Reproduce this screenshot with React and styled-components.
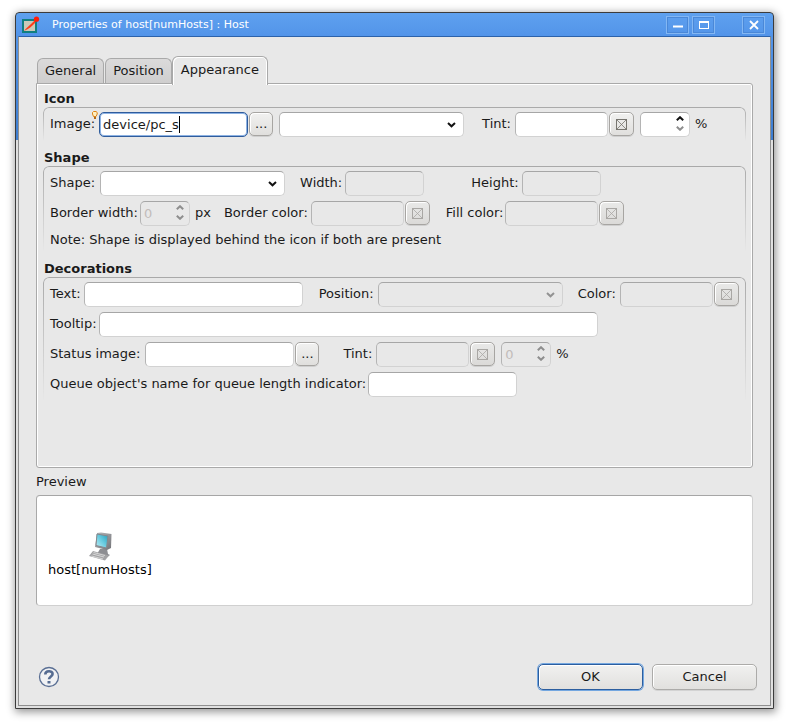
import React, { useState } from 'react'
import styled, { createGlobalStyle, css } from 'styled-components'

const GlobalStyle = createGlobalStyle`
  * {
    box-sizing: border-box;
  }

  body {
    margin: 0;
    background: #ffffff;
    color: #1a1a1a;
    font-family: "DejaVu Sans", Verdana, sans-serif;
    font-size: 13px;
    line-height: 16px;
  }

  button, input, select {
    font: inherit;
    color: inherit;
    margin: 0;
  }
`

const Page = styled.div`
  padding: 12px 15px 18px 15px;
`

const Dialog = styled.main`
  padding: 0 2px 2px 2px;
  border: 1px solid #3c3c3c;
  border-radius: 4px 4px 0 0;
  background: linear-gradient(#5fa1ef 0, #5294e9 23px, #3d7dd0 127px, #e0e0e0 127px);
  box-shadow: 1px 2px 8px 1px rgba(0, 0, 0, 0.42);
`

const TitleBar = styled.header`
  display: flex;
  align-items: center;
  height: 23px;
  padding: 0 6px 0 4px;
  color: #ffffff;
  font-size: 11px;
`

const Title = styled.h1`
  flex: 1;
  margin: 0 0 0 12px;
  font-size: 11px;
  font-weight: normal;
`

const WindowButton = styled.button`
  display: flex;
  align-items: center;
  justify-content: center;
  width: 23px;
  height: 18px;
  margin-left: ${props => props.$apart ? '27px' : '3px'};
  padding: 0;
  border: 1px solid #83b7f3;
  background: transparent;
  box-shadow: inset 0 0 0 1px #4a88d8;
`

const Content = styled.div`
  display: flex;
  flex-direction: column;
  padding: 18px 13px 15px 17px;
  border: 1px solid #8f8f8f;
  border-top-color: #2c62aa;
  background: #e8e8e8;
`

const Tabs = styled.div`
  display: flex;
  align-items: flex-end;
  gap: 1px;
  height: 28px;
  padding-left: 1px;
`

const Tab = styled.button`
  height: 25px;
  padding: 0 7px;
  border: 1px solid #a9a9a9;
  border-bottom: none;
  border-radius: 6px 6px 0 0;
  background: linear-gradient(#dbdada, #cfcece);

  ${props => props.$active && css`
    position: relative;
    height: 29px;
    margin: 0 0 -2px -1px;
    padding: 0 8px 2px 8px;
    background: #e8e8e8;
    box-shadow: inset 1px 1px 0 #ffffff, inset -1px 0 0 #ffffff;
    z-index: 1;
  `}
`

const Panel = styled.div`
  min-height: 385px;
  margin-right: 4px;
  padding: 7px 6px;
  border: 1px solid #a9a9a9;
  border-radius: 0 3px 3px 3px;
  box-shadow: inset 0 0 0 1px #ffffff;
`

const GroupTitle = styled.h2`
  margin: 0 0 0 1px;
  font-size: 13px;
  line-height: 16px;
  font-weight: bold;
`

const Group = styled.section`
  position: relative;
  display: flex;
  flex-direction: column;
  gap: 4px;
  padding: 4px 7px 0 7px;
  margin-bottom: ${props => props.$after || 0}px;

  /* the frame fades out towards the bottom */
  &::before {
    content: '';
    position: absolute;
    inset: 0 0 -4px 0;
    border: 1px solid #a9a9a9;
    border-bottom: none;
    border-radius: 6px 6px 0 0;
    mask-image: linear-gradient(#000, transparent);
    pointer-events: none;
  }
`

const Row = styled.div`
  display: flex;
  align-items: center;
  min-height: 26px;
`

const Label = styled.label`
  margin-left: ${props => props.$before || 0}px;
  margin-right: ${props => props.$after || 4}px;
  white-space: nowrap;
`

const Unit = styled.span`
  margin-left: 5px;
`

const Note = styled.p`
  margin: 2px 0 0 0;
`

const box = css`
  height: 25px;
  border: 1px solid #d2d2d2;
  border-top-color: #a6a6a6;
  border-left-color: #b4b4b4;
  border-radius: 5px;
  background: #ffffff;
  outline: none;

  &:disabled {
    background: #e8e8e8;
    color: #c2bcba;
    opacity: 1;
  }
`

const Input = styled.input`
  ${box}
  width: ${props => props.$width}px;
  padding: 0 3px;

  ${props => props.$focused && css`
    border-color: #2f5c9c;
    box-shadow: inset 0 0 0 1px #8db2e3;
  `}
`

const Wrap = styled.span`
  position: relative;
  display: flex;
  margin-left: ${props => props.$before || 0}px;
`

const Caret = styled.span`
  position: absolute;
  left: 80px;
  top: 4px;
  width: 1px;
  height: 17px;
  background: #000000;
`

const Bulb = styled.svg`
  position: absolute;
  left: -7px;
  top: -1px;
`

const SelectBox = styled.select`
  ${box}
  appearance: none;
  width: 185px;
  padding: 0 24px 0 6px;
`

const SelectArrow = styled.svg`
  position: absolute;
  right: 8px;
  top: 10px;
  pointer-events: none;
`

const SpinInput = styled.input`
  ${box}
  appearance: textfield;
  width: 50px;
  padding: 0 18px 0 3px;

  &::-webkit-inner-spin-button {
    display: none;
  }
`

const SpinArrows = styled.span`
  position: absolute;
  right: 5px;
  top: 2px;
  display: flex;
  flex-direction: column;
`

const SpinButton = styled.button`
  display: flex;
  align-items: center;
  justify-content: center;
  width: 10px;
  height: 10px;
  padding: 0;
  border: none;
  background: none;
  color: ${props => props.$strong ? '#111111' : '#8e8e8e'};
`

const SmallButton = styled.button`
  display: flex;
  align-items: center;
  justify-content: center;
  width: ${props => props.$wide ? 25 : 24}px;
  height: 24px;
  margin-left: 1px;
  padding: 0;
  border: 1px solid #a7a5a2;
  border-radius: 5px;
  background: linear-gradient(#f1f1f0, #e0dfdd);
  box-shadow: inset 1px 1px 0 #ffffff, 0 1px 0 #cfcfcf;
  color: #77756f;

  &:disabled {
    background: linear-gradient(#e9e9e8, #dbdad8);
    color: #a9a7a4;
  }
`

const Dots = styled.span`
  color: #1a1a1a;
`

const PreviewTitle = styled.h2`
  margin: 6px 0 5px 0;
  font-size: 13px;
  line-height: 16px;
  font-weight: normal;
`

const Preview = styled.div`
  min-height: 111px;
  margin-right: 4px;
  padding: 36px 11px 26px 11px;
  border: 1px solid #d0d0d0;
  border-top-color: #a6a6a6;
  border-left-color: #a9a9a9;
  border-radius: 4px;
  background: #ffffff;
`

const Figure = styled.figure`
  display: inline-flex;
  flex-direction: column;
  align-items: center;
  margin: 0;
  color: #000000;
`

const Footer = styled.footer`
  display: flex;
  align-items: center;
  gap: 9px;
  margin-top: 58px;
`

const HelpButton = styled.button`
  display: flex;
  margin: 0 auto 0 2px;
  padding: 0;
  border: none;
  background: none;
`

const DialogButton = styled.button`
  width: 105px;
  height: 26px;
  border: 1px solid #acaba9;
  border-radius: 5px;
  background: linear-gradient(#f1f1f0, #e1e0de);
  box-shadow: inset 1px 1px 0 #ffffff, 0 1px 0 #d3d3d3;

  ${props => props.$primary && css`
    border-color: #2c5e9f;
    box-shadow: inset 1px 1px 0 #ffffff, 0 0 0 1px #74a7e0;
  `}
`

const AppIcon = () => (
  <svg width="18" height="18" viewBox="0 0 18 18" aria-hidden="true">
    <rect x="1" y="4" width="13" height="12" fill="#c9c9b8" stroke="#118080" strokeWidth="2" />
    <path d="M2 15 C4 12 7 10 9 8 L14 3 L13 7 C10 10 7 13 2 15Z" fill="#ff3b18" />
    <circle cx="14.5" cy="3.2" r="2.6" fill="#ff1c08" />
  </svg>
)

const BulbIcon = () => (
  <Bulb width="6" height="9" viewBox="0 0 6 9" aria-hidden="true">
    <path d="M1.5 5.5 L.5 3 V1.5 L1.5 .5 H4 L5.2 1.5 V3 L4 5.5Z" fill="#fff0c2" stroke="#df8516" />
    <path d="M2 6 H4 V8 H2Z" fill="#ad671a" />
  </Bulb>
)

const CrossIcon = () => (
  <svg width="11" height="11" viewBox="0 0 11 11" fill="none" stroke="currentColor" aria-hidden="true">
    <rect x=".5" y=".5" width="10" height="10" />
    <path d="M1 1 L10 10 M10 1 L1 10" strokeWidth=".8" />
  </svg>
)

const ComputerIcon = () => (
  <svg width="24" height="30" viewBox="0 0 24 30" aria-hidden="true">
    <defs>
      <linearGradient id="screen" x1="0" y1="1" x2="1" y2="0">
        <stop offset="0" stopColor="#c0edf5" />
        <stop offset=".5" stopColor="#69cce0" />
        <stop offset="1" stopColor="#249fbd" />
      </linearGradient>
      <linearGradient id="metal" x1="0" y1="0" x2="1" y2="1">
        <stop offset="0" stopColor="#b9babd" />
        <stop offset="1" stopColor="#717276" />
      </linearGradient>
    </defs>
    <path d="M12 17 L19 17 L20 22 L22 23 L18 26 L9 22Z" fill="#8d8e92" />
    <path d="M9 1 L13 .5 L23.5 2 L23 16 L19 18 L7 15Z" fill="url(#metal)" />
    <path d="M9 2 L20 4 L18.5 16 L8 13.5Z" fill="url(#screen)" stroke="#85888d" />
    <path d="M5 19 L21 23.5 L17 28.5 L1 24Z" fill="#a3a3a5" />
    <path d="M5.5 20.5 L17 23.5 M4.5 22 L16 25 M3.5 24 L15 27" stroke="#d6d6d6" />
  </svg>
)

const HelpIcon = () => (
  <svg width="22" height="22" viewBox="0 0 22 22" fill="none" aria-hidden="true">
    <circle cx="11" cy="11" r="9.5" fill="#f1f2f4" stroke="#5a6f94" strokeWidth="1.3" />
    <path d="M7.3 8.5 C7.3 4.2 14.6 4.3 14.6 8 C14.6 10.4 11 10.5 11 13.3" stroke="#566c92" strokeWidth="2.6" />
    <path d="M11 15 V17.5" stroke="#566c92" strokeWidth="3" />
  </svg>
)

const Chevron = ({ up }) => (
  <svg width="8" height="5" viewBox="0 0 8 5" fill="none" stroke="currentColor" strokeWidth="2" aria-hidden="true">
    <path d={up ? 'M.8 4.2 L4 1.2 L7.2 4.2' : 'M.8 .8 L4 3.8 L7.2 .8'} />
  </svg>
)

const Select = ({ id, label, disabled, before }) => (
  <Wrap $before={before}>
    <SelectBox id={id} aria-label={label} disabled={disabled}>
      <option value=""></option>
    </SelectBox>
    <SelectArrow width="9" height="6" viewBox="0 0 9 6" fill="none" stroke={disabled ? '#929292' : '#111111'} strokeWidth="2">
      <path d="M1 1 L4.5 4.3 L8 1" />
    </SelectArrow>
  </Wrap>
)

const Spinner = ({ id, label, value, disabled, before }) => (
  <Wrap $before={before}>
    <SpinInput id={id} aria-label={label} type="number" defaultValue={value} disabled={disabled} />
    <SpinArrows>
      <SpinButton type="button" aria-label="Increase" disabled={disabled} $strong={!disabled}><Chevron up /></SpinButton>
      <SpinButton type="button" aria-label="Decrease" disabled={disabled}><Chevron /></SpinButton>
    </SpinArrows>
  </Wrap>
)

const ColorField = ({ id, disabled }) => (
  <>
    <Input id={id} $width={93} disabled={disabled} />
    <SmallButton type="button" aria-label="Pick color" $wide disabled={disabled}><CrossIcon /></SmallButton>
  </>
)

const App = () => {

  const tabs = ['General', 'Position', 'Appearance']
  const [active, setActive] = useState('Appearance')
  const [image, setImage] = useState('device/pc_s')

  return (
    <Page>
      <GlobalStyle />
      <Dialog>
        <TitleBar>
          <AppIcon />
          <Title>Properties of host[numHosts] : Host</Title>
          <WindowButton aria-label="Minimize">
            <svg width="10" height="10"><path d="M0 6.5 H10" stroke="#fff" strokeWidth="2" /></svg>
          </WindowButton>
          <WindowButton aria-label="Maximize">
            <svg width="10" height="10" fill="none" stroke="#fff">
              <rect x=".5" y="1.5" width="9" height="7" />
              <path d="M0 2 H10" strokeWidth="2" />
            </svg>
          </WindowButton>
          <WindowButton aria-label="Close" $apart>
            <svg width="10" height="10"><path d="M1 1 L9 9 M9 1 L1 9" stroke="#fff" strokeWidth="1.8" /></svg>
          </WindowButton>
        </TitleBar>

        <Content>
          <Tabs role="tablist">
            {tabs.map(tab => (
              <Tab
                key={tab}
                type="button"
                role="tab"
                aria-selected={tab === active}
                $active={tab === active}
                onClick={() => setActive(tab)}
              >
                {tab}
              </Tab>
            ))}
          </Tabs>

          <Panel role="tabpanel">
            <GroupTitle>Icon</GroupTitle>
            <Group $after={13}>
              <Row>
                <Label htmlFor="image">Image:</Label>
                <Wrap>
                  <Input id="image" $width={149} $focused value={image} onChange={e => setImage(e.target.value)} />
                  <BulbIcon />
                  <Caret />
                </Wrap>
                <SmallButton type="button" aria-label="Browse images"><Dots>...</Dots></SmallButton>
                <Select label="Image size" before={6} />
                <Label htmlFor="tint" $before={18}>Tint:</Label>
                <ColorField id="tint" />
                <Spinner label="Tint amount" before={6} />
                <Unit>%</Unit>
              </Row>
            </Group>

            <GroupTitle>Shape</GroupTitle>
            <Group $after={13}>
              <Row>
                <Label htmlFor="shape" $after={5}>Shape:</Label>
                <Select id="shape" />
                <Label htmlFor="width" $before={15} $after={3}>Width:</Label>
                <Input id="width" $width={79} disabled />
                <Label htmlFor="height" $before={47} $after={3}>Height:</Label>
                <Input id="height" $width={79} disabled />
              </Row>
              <Row>
                <Label htmlFor="border-width" $after={2}>Border width:</Label>
                <Spinner id="border-width" value="0" disabled />
                <Unit>px</Unit>
                <Label htmlFor="border-color" $before={13} $after={3}>Border color:</Label>
                <ColorField id="border-color" disabled />
                <Label htmlFor="fill-color" $before={16} $after={2}>Fill color:</Label>
                <ColorField id="fill-color" disabled />
              </Row>
              <Note>Note: Shape is displayed behind the icon if both are present</Note>
            </Group>

            <GroupTitle>Decorations</GroupTitle>
            <Group>
              <Row>
                <Label htmlFor="text" $after={3}>Text:</Label>
                <Input id="text" $width={219} />
                <Label htmlFor="position" $before={16}>Position:</Label>
                <Select id="position" disabled />
                <Label htmlFor="color" $before={15}>Color:</Label>
                <ColorField id="color" disabled />
              </Row>
              <Row>
                <Label htmlFor="tooltip" $after={2}>Tooltip:</Label>
                <Input id="tooltip" $width={499} />
              </Row>
              <Row>
                <Label htmlFor="status-image" $after={5}>Status image:</Label>
                <Input id="status-image" $width={149} />
                <SmallButton type="button" aria-label="Browse status images"><Dots>...</Dots></SmallButton>
                <Label htmlFor="status-tint" $before={24}>Tint:</Label>
                <ColorField id="status-tint" disabled />
                <Spinner label="Status tint amount" value="0" disabled before={6} />
                <Unit>%</Unit>
              </Row>
              <Row>
                <Label htmlFor="queue" $after={2}>Queue object's name for queue length indicator:</Label>
                <Input id="queue" $width={149} />
              </Row>
            </Group>
          </Panel>

          <PreviewTitle>Preview</PreviewTitle>
          <Preview>
            <Figure>
              <ComputerIcon />
              <figcaption>host[numHosts]</figcaption>
            </Figure>
          </Preview>

          <Footer>
            <HelpButton type="button" aria-label="Help"><HelpIcon /></HelpButton>
            <DialogButton type="button" $primary>OK</DialogButton>
            <DialogButton type="button">Cancel</DialogButton>
          </Footer>
        </Content>
      </Dialog>
    </Page>
  )
}

export default App
